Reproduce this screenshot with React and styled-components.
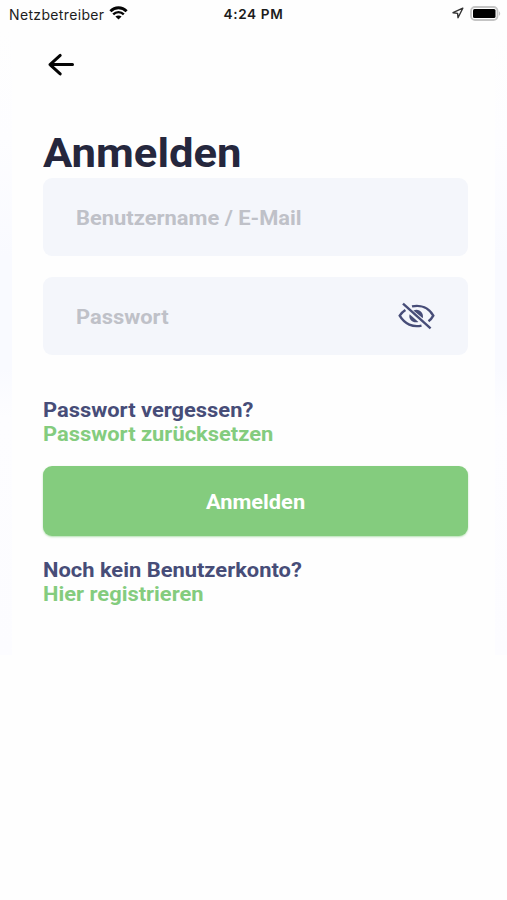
import styled, { createGlobalStyle } from 'styled-components';

const color = {
  white: '#ffffff',
  black: '#050505',
  status: '#1c1c1c',
  title: '#25273d',
  navy: '#474d78',
  green: '#84cc7e',
  field: '#f4f6fb',
  placeholder: '#bfc1c8',
};

const GlobalStyle = createGlobalStyle`
  * {
    box-sizing: border-box;
  }

  body {
    margin: 0;
    background-color: #fefefe;
    font-family: Roboto, 'Liberation Sans', sans-serif;
  }
`;

const Screen = styled.div`
  width: 507px;
  height: 900px;
  overflow: hidden;
`;

const StatusBar = styled.header`
  display: grid;
  grid-template-columns: 1fr auto 1fr;
  align-items: center;
  height: 28px;
  padding: 0 6px 2px 9px;
  font-family: Inter, sans-serif;
  font-size: 13.4px;
  color: ${color.status};
`;

const StatusGroup = styled.div`
  display: flex;
  align-items: center;
  justify-content: ${({ $end }) => ($end ? 'flex-end' : 'flex-start')};
  gap: 6px;
`;

const Carrier = styled.span`
  width: 94px;
  padding-top: 2px;
  font-size: 14px;
  letter-spacing: 0.35px;
  white-space: nowrap;
`;

const Clock = styled.time`
  margin-right: 3px;
  padding-top: 2px;
  font-size: 13.6px;
  font-weight: 600;
  letter-spacing: 0.65px;
`;

const Backdrop = styled.div`
  height: 627px;
  padding: 0 12px;
  background: linear-gradient(
    #fefefe 0,
    #fdfdff 110px,
    #f9faff 230px,
    #f9faff 340px,
    #fdfdff 390px,
    #fcfcff 100%
  );
`;

const Card = styled.main`
  display: flex;
  flex-direction: column;
  height: 100%;
  padding: 22px 27px 0 31px;
  background-color: #fefefe;
`;

const BackButton = styled.button`
  display: flex;
  width: 36px;
  height: 30px;
  padding: 3px 4px;
  border: 0;
  background: none;
`;

const Title = styled.h1`
  margin: 49px 0 0;
  font-size: 40.5px;
  font-weight: 700;
  line-height: 49px;
  color: ${color.title};
  transform: scaleX(1.077);
  transform-origin: left;
`;

const Field = styled.label`
  display: flex;
  align-items: center;
  justify-content: space-between;
  height: 78px;
  margin-bottom: 21px;
  padding: 0 33px;
  border-radius: 9px;
  background-color: ${color.field};
`;

const Input = styled.input`
  width: 260px;
  padding: 1px 0 0;
  border: 0;
  outline: none;
  background: none;
  font-family: inherit;
  font-size: 20px;
  font-weight: 700;
  transform: scaleX(1.094);
  transform-origin: left;

  &::placeholder {
    color: ${color.placeholder};
    opacity: 1;
  }
`;

const LinkBlock = styled.div`
  display: flex;
  flex-direction: column;
  align-items: flex-start;
  margin-top: ${({ $top }) => $top}px;
  font-size: 20px;
  font-weight: 700;
  line-height: 24px;
  transform: scaleX(1.094);
  transform-origin: left;
`;

const Question = styled.span`
  color: ${color.navy};
`;

const TextLink = styled.a`
  color: ${color.green};
`;

const SubmitButton = styled.button`
  height: 70px;
  margin-top: 20px;
  padding: 2px 0 0;
  border: 0;
  border-radius: 9px;
  background-color: ${color.green};
  box-shadow: 0 1px 2px rgba(132, 204, 126, 0.6);
  font-family: inherit;
  font-size: 20px;
  font-weight: 700;
  color: ${color.white};
`;

const ButtonLabel = styled.span`
  display: inline-block;
  transform: scaleX(1.09);
`;

const WifiIcon = () => (
  <svg width="19" height="14" viewBox="0 0 19 14" fill="none" stroke={color.black}>
    <path d="M1.4 5.2C6 .6 13 .6 17.6 5.2" strokeWidth="2.9" />
    <path d="M4.2 8.4c3-3 7.6-3 10.6 0" strokeWidth="2.4" />
    <path d="M6.4 10.6c1.7-1.5 4.5-1.5 6.2 0l-3.1 3z" fill={color.black} stroke="none" />
  </svg>
);

const LocationIcon = () => (
  <svg width="12" height="12" viewBox="0 0 12 12" fill="none">
    <path d="M10.8 1.2 1 5.7l4.6.7.4 4.4z" stroke="#333" strokeWidth="1.4" strokeLinejoin="round" />
  </svg>
);

const BatteryIcon = () => (
  <svg width="31" height="15" viewBox="0 0 31 15">
    <rect x="1" y="1" width="26.5" height="13" rx="4" fill="#fff" stroke="#c4c4c4" strokeWidth="1.8" />
    <rect x="3" y="3" width="22.5" height="9" rx="1.5" fill="#000" />
    <path d="M29 5.2c1.6.8 1.6 3.8 0 4.6z" fill="#c4c4c4" />
  </svg>
);

const BackIcon = () => (
  <svg
    width="28"
    height="24"
    viewBox="0 0 28 24"
    fill="none"
    stroke={color.black}
    strokeWidth="3"
    strokeLinecap="round"
    strokeLinejoin="round"
  >
    <path d="M25.5 11.6H3M13.2 2.4 3 11.6l10.2 9.3" />
  </svg>
);

const HiddenIcon = () => (
  <svg width="37" height="30" viewBox="0 0 37 30" fill="none" stroke={color.navy} strokeWidth="2.4">
    <path d="M14 5.4C22.8 3.5 30.8 6.8 35.3 14.6c-1.3 2.4-2.8 4.2-4.8 5.6" />
    <path d="M7.4 9.1c-2.2 1.4-4.1 3.2-5.7 5.6C6.7 23.2 15 26.6 23.5 24.6" />
    <path d="M15.4 9.6c5.2-2.6 10.6 1.7 9.4 7.6z" fill={color.navy} stroke="none" />
    <path d="M11.6 13.2c-1.6 5.2 3.4 9.3 8.8 7.8z" fill={color.navy} stroke="none" />
    <path d="m5 2.6 27.6 24.8" strokeWidth="2.4" />
  </svg>
);

export default function App() {
  return (
    <Screen>
      <GlobalStyle />
      <StatusBar>
        <StatusGroup>
          <Carrier>Netzbetreiber</Carrier>
          <WifiIcon />
        </StatusGroup>
        <Clock>4:24 PM</Clock>
        <StatusGroup $end>
          <LocationIcon />
          <BatteryIcon />
        </StatusGroup>
      </StatusBar>
      <Backdrop>
        <Card>
          <BackButton aria-label="Zurück">
            <BackIcon />
          </BackButton>
          <Title>Anmelden</Title>
          <Field>
            <Input placeholder="Benutzername / E-Mail" />
          </Field>
          <Field>
            <Input type="password" placeholder="Passwort" />
            <HiddenIcon />
          </Field>
          <LinkBlock $top={22}>
            <Question>Passwort vergessen?</Question>
            <TextLink>Passwort zurücksetzen</TextLink>
          </LinkBlock>
          <SubmitButton>
            <ButtonLabel>Anmelden</ButtonLabel>
          </SubmitButton>
          <LinkBlock $top={22}>
            <Question>Noch kein Benutzerkonto?</Question>
            <TextLink>Hier registrieren</TextLink>
          </LinkBlock>
        </Card>
      </Backdrop>
    </Screen>
  );
}
